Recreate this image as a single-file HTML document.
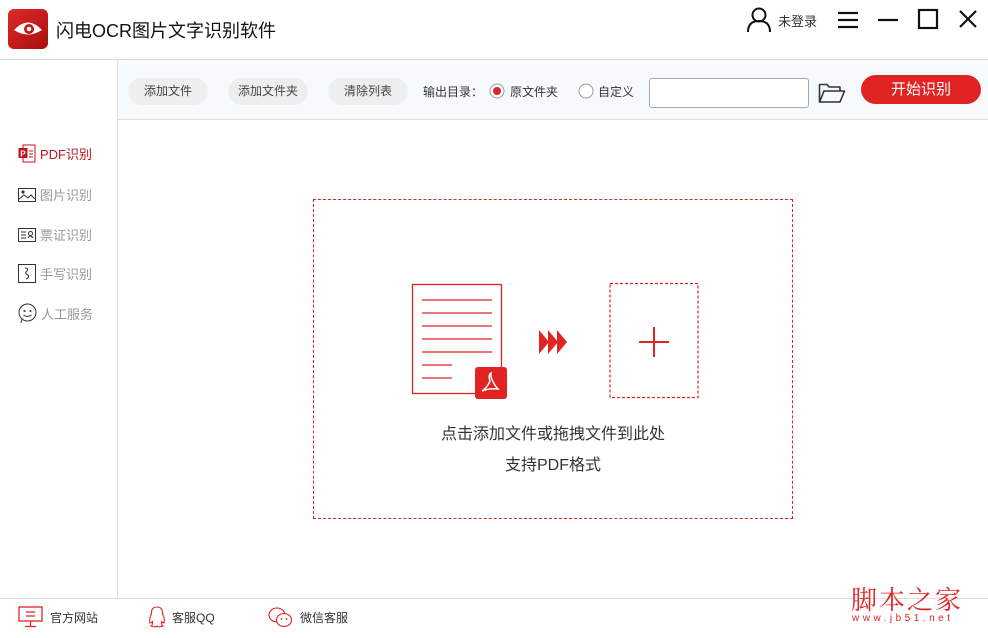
<!DOCTYPE html>
<html><head><meta charset="utf-8"><style>
*{margin:0;padding:0;box-sizing:border-box}
body{width:988px;height:638px;background:#fff;font-family:"Liberation Sans","Noto Sans CJK SC",sans-serif;position:relative;overflow:hidden;color:#333}
.abs{position:absolute}
.btn{position:absolute;top:78px;height:27px;background:#eeeeee;border-radius:14px;font-size:12px;color:#444;text-align:center;line-height:27px}
.side{position:absolute;left:18px;font-size:13px;color:#999;display:flex;align-items:center;gap:4px}
.foot{position:absolute;top:606px;font-size:12px;color:#333;display:flex;align-items:center;gap:6px}
</style></head><body>
<div class="abs" style="left:8px;top:9px;width:40px;height:40px;border-radius:6px;background:linear-gradient(135deg,#e02a2a,#a80e10)">
<svg width="40" height="40" viewBox="0 0 40 40"><path d="M6 21 Q20 6 34 21 Q20 30 6 21Z" fill="#fff"/><circle cx="21" cy="20" r="5" fill="#c01818"/><circle cx="21" cy="20" r="2.3" fill="#fff"/></svg></div>
<div class="abs" style="left:56px;top:17px;font-size:18px;color:#111">闪电OCR图片文字识别软件</div>
<svg class="abs" style="left:746px;top:6px" width="28" height="26" viewBox="0 0 28 26"><circle cx="13" cy="9" r="6.5" fill="none" stroke="#111" stroke-width="2"/><path d="M2 26 Q2 15 13 15 Q24 15 24 26" fill="none" stroke="#111" stroke-width="2"/></svg>
<div class="abs" style="left:778px;top:11px;font-size:13px;color:#333">未登录</div>
<svg class="abs" style="left:837px;top:11px" width="22" height="18"><path d="M1 2H21M1 9H21M1 16H21" stroke="#111" stroke-width="2.2"/></svg>
<svg class="abs" style="left:877px;top:10px" width="22" height="20"><path d="M1 10H21" stroke="#111" stroke-width="2.2"/></svg>
<svg class="abs" style="left:917px;top:8px" width="22" height="22"><rect x="2" y="2" width="18" height="18" fill="none" stroke="#111" stroke-width="2.2"/></svg>
<svg class="abs" style="left:958px;top:9px" width="20" height="20"><path d="M2 2L18 18M18 2L2 18" stroke="#111" stroke-width="2.2"/></svg>
<div class="abs" style="left:0;top:59px;width:988px;height:1px;background:#dcdcdc"></div>
<div class="abs" style="left:117px;top:60px;width:1px;height:538px;background:#dcdcdc"></div>
<div class="abs" style="left:118px;top:60px;width:870px;height:60px;background:#f7fafd;border-bottom:1px solid #dedede"></div>
<div class="btn" style="left:128px;width:80px">添加文件</div>
<div class="btn" style="left:228px;width:80px">添加文件夹</div>
<div class="btn" style="left:328px;width:80px">清除列表</div>
<div class="abs" style="left:423px;top:83px;font-size:12px;color:#333">输出目录：</div>
<svg class="abs" style="left:489px;top:83px" width="16" height="16"><circle cx="8" cy="8" r="7" fill="#fff" stroke="#999"/><circle cx="8" cy="8" r="4" fill="#e02424"/></svg>
<div class="abs" style="left:510px;top:83px;font-size:12px;color:#333">原文件夹</div>
<svg class="abs" style="left:578px;top:83px" width="16" height="16"><circle cx="8" cy="8" r="7" fill="#fff" stroke="#999"/></svg>
<div class="abs" style="left:598px;top:83px;font-size:12px;color:#333">自定义</div>
<div class="abs" style="left:649px;top:78px;width:160px;height:30px;background:#fff;border:1px solid #aaa;border-radius:3px"></div>
<svg class="abs" style="left:818px;top:82px" width="28" height="22" viewBox="0 0 28 22"><path d="M1.5 20V2.5H9L11 5H22V9M1.5 20L6 9H26.5L22 20Z" fill="none" stroke="#333" stroke-width="1.6" stroke-linejoin="round"/></svg>
<div class="abs" style="left:861px;top:75px;width:120px;height:29px;background:#e02424;border-radius:15px;color:#fff;font-size:15px;text-align:center;line-height:29px">开始识别</div>
<div class="side" style="top:144px;color:#c0161b"><svg width="18" height="19"><rect x="5" y="1" width="12" height="17" fill="#fff" stroke="#c0161b"/><rect x="0.5" y="4" width="9" height="10" fill="#c0161b"/><text x="2.3" y="12.5" font-size="8" fill="#fff" font-family="Liberation Sans" font-weight="bold">P</text><path d="M11 7H15M11 10H15M11 13H15" stroke="#c0161b"/></svg>PDF识别</div>
<div class="side" style="top:185px"><svg width="18" height="16"><rect x="0.5" y="1.5" width="17" height="13" fill="none" stroke="#333"/><circle cx="5" cy="5" r="1.6" fill="#333"/><path d="M1 12L6 8L10 11L13 8L17 12" fill="none" stroke="#333"/></svg>图片识别</div>
<div class="side" style="top:225px"><svg width="18" height="16"><rect x="0.5" y="1.5" width="17" height="13" fill="none" stroke="#333"/><path d="M3 5H8M3 8H8M3 11H8" stroke="#333"/><circle cx="12.5" cy="6.5" r="2" fill="none" stroke="#333"/><path d="M10 11Q12.5 7 15 11" fill="none" stroke="#333"/></svg>票证识别</div>
<div class="side" style="top:264px"><svg width="18" height="19"><rect x="0.5" y="0.5" width="17" height="18" fill="none" stroke="#333"/><path d="M7 4Q11 4 9 7Q6 9 10 11Q12 13 8 15" fill="none" stroke="#333"/></svg>手写识别</div>
<div class="side" style="top:303px"><svg width="19" height="21"><circle cx="9.5" cy="9.5" r="8.5" fill="none" stroke="#333"/><circle cx="6.5" cy="8" r="1" fill="#333"/><circle cx="12.5" cy="8" r="1" fill="#333"/><path d="M5.5 12Q9.5 15 13.5 12" fill="none" stroke="#333"/><path d="M4 16L3 20" stroke="#333"/></svg>人工服务</div>
<div class="abs" style="left:313px;top:199px;width:480px;height:320px;border:1px dashed #e02424"></div>
<svg class="abs" style="left:410px;top:282px" width="300" height="120" viewBox="0 0 300 120">
<rect x="2.5" y="2.5" width="89" height="109" fill="#fff" stroke="#e02424" stroke-width="1.3"/>
<path d="M12 18H82M12 31H82M12 44H82M12 57H82M12 70H82M12 83H42M12 96H42" stroke="#e02424" stroke-width="1.3"/>
<rect x="65" y="85" width="32" height="32" rx="3" fill="#e02424"/>
<path d="M81 91Q78 93 80 99Q77 106 72 109Q79 106 88 107Q84 103 81 95Z" fill="none" stroke="#fff" stroke-width="1.5"/>
<path d="M129 48L139 60L129 72ZM138 48L148 60L138 72ZM147 48L157 60L147 72Z" fill="#e02424"/>
<rect x="200" y="1.5" width="88" height="114" fill="none" stroke="#e02424" stroke-dasharray="3,2" stroke-width="1.2"/>
<path d="M229 60H259M244 45V75" stroke="#e02424" stroke-width="2"/>
</svg>
<div class="abs" style="left:313px;width:480px;top:420px;text-align:center;font-size:16px;color:#333">点击添加文件或拖拽文件到此处</div>
<div class="abs" style="left:313px;width:480px;top:451px;text-align:center;font-size:16px;color:#333">支持PDF格式</div>
<div class="abs" style="left:0;top:598px;width:988px;height:1px;background:#dcdcdc"></div>
<div class="foot" style="left:18px"><svg width="26" height="22"><rect x="1" y="1" width="23" height="14" fill="none" stroke="#e02424" stroke-width="1.3"/><path d="M8 6H17M8 10H17M12.5 15V20M7 20.5H18" stroke="#e02424" stroke-width="1.3"/></svg>官方网站</div>
<div class="foot" style="left:148px;gap:6px"><svg width="18" height="22"><path d="M9 1Q3 1 3.5 8Q1 12 2 17Q4 17 4.5 15Q5 19 3 20Q9 22 9 19.5Q9 22 15 20Q13 19 13.5 15Q14 17 16 17Q17 12 14.5 8Q15 1 9 1Z" fill="none" stroke="#e02424" stroke-width="1.1"/></svg>客服QQ</div>
<div class="foot" style="left:268px"><svg width="26" height="22"><ellipse cx="9" cy="9" rx="8" ry="7" fill="none" stroke="#e02424" stroke-width="1.1"/><ellipse cx="16" cy="14" rx="7.5" ry="6.5" fill="#fff" stroke="#e02424" stroke-width="1.1"/><circle cx="13.5" cy="13" r=".9" fill="#e02424"/><circle cx="18.5" cy="13" r=".9" fill="#e02424"/></svg>微信客服</div>
<div class="abs" style="left:851px;top:580px;font-size:26px;color:#e02424;font-family:'Noto Serif CJK SC',serif;letter-spacing:2px">脚本之家</div>
<div class="abs" style="left:852px;top:613px;font-size:10px;color:#e02424;letter-spacing:3.5px">www.jb51.net</div>
</body></html>
